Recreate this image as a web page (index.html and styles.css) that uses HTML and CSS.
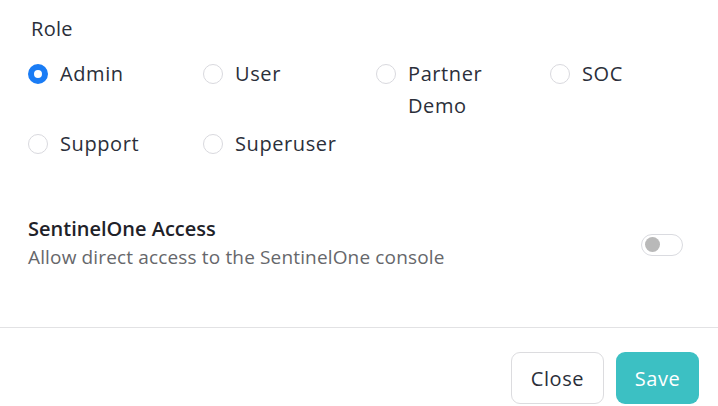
FILE: index.html
```html
<!DOCTYPE html>
<html>
<head>
<meta charset="utf-8">
<link rel="stylesheet" href="styles.css">
</head>
<body>
<div class="modal">
  <div class="content">
    <div class="label">Role</div>
    <div class="radios">
      <label class="radio"><span class="dot checked"></span><span class="txt">Admin</span></label>
      <label class="radio"><span class="dot"></span><span class="txt">User</span></label>
      <label class="radio"><span class="dot"></span><span class="txt">Partner<br>Demo</span></label>
      <label class="radio"><span class="dot"></span><span class="txt">SOC</span></label>
      <label class="radio"><span class="dot"></span><span class="txt">Support</span></label>
      <label class="radio"><span class="dot"></span><span class="txt">Superuser</span></label>
    </div>
    <div class="access">
      <div class="access-text">
        <div class="access-title">SentinelOne Access</div>
        <div class="access-desc">Allow direct access to the SentinelOne console</div>
      </div>
      <span class="toggle"><span class="knob"></span></span>
    </div>
  </div>
  <div class="footer">
    <button class="btn close">Close</button>
    <button class="btn save">Save</button>
  </div>
</div>
</body>
</html>
```
FILE: styles.css
```css
html, body {
  margin: 0;
  padding: 0;
  background: #fff;
}
body {
  font-family: "Open Sans", Lato, sans-serif;
  color: #2b2f3a;
}
.modal {
  width: 718px;
  height: 406px;
  overflow: hidden;
}
.content {
  padding: 14px 35px 0 28px;
  height: 328px;
  box-sizing: border-box;
  border-bottom: 1px solid #e2e2e4;
}
.label {
  font-size: 20px;
  line-height: 30px;
  letter-spacing: 0.3px;
  padding-left: 3px;
}
.radios {
  margin-top: 14px;
  display: grid;
  grid-template-columns: 175px 173px 174px 100px;
  row-gap: 6px;
}
.radio {
  display: flex;
  align-items: flex-start;
  font-size: 20px;
  letter-spacing: 0.6px;
  line-height: 32px;
}
.dot {
  width: 20px;
  height: 20px;
  box-sizing: border-box;
  border: 1px solid #d9d9de;
  border-radius: 50%;
  margin-top: 6px;
  flex: none;
  background: #fff;
}
.dot.checked {
  border: 6px solid #1a7cf5;
}
.txt {
  margin-left: 12px;
}
.access {
  margin-top: 55px;
  display: flex;
  justify-content: space-between;
  align-items: center;
}
.access-title {
  font-size: 20px;
  font-weight: 600;
  line-height: 28px;
  color: #1f2229;
}
.access-desc {
  font-size: 19px;
  letter-spacing: 0.15px;
  line-height: 29px;
  color: #66676b;
}
.toggle {
  width: 42px;
  height: 22px;
  box-sizing: border-box;
  border: 1px solid #dadbe0;
  border-radius: 11px;
  display: flex;
  align-items: center;
  padding-left: 3px;
  margin-top: 2px;
}
.knob {
  width: 15px;
  height: 15px;
  border-radius: 50%;
  background: #b9b9b9;
}
.footer {
  display: flex;
  justify-content: flex-end;
  gap: 12px;
  padding: 24px 19px 0 0;
}
.btn {
  font-family: "Open Sans", Lato, sans-serif;
  font-size: 20px;
  letter-spacing: 0.6px;
  height: 52px;
  border-radius: 9px;
  padding: 0;
  cursor: pointer;
}
.close {
  background: #fff;
  border: 1px solid #dcdcdf;
  color: #2b2f3a;
  width: 93px;
}
.save {
  background: #3cc0c3;
  border: none;
  color: #fff;
  width: 83px;
}
```
